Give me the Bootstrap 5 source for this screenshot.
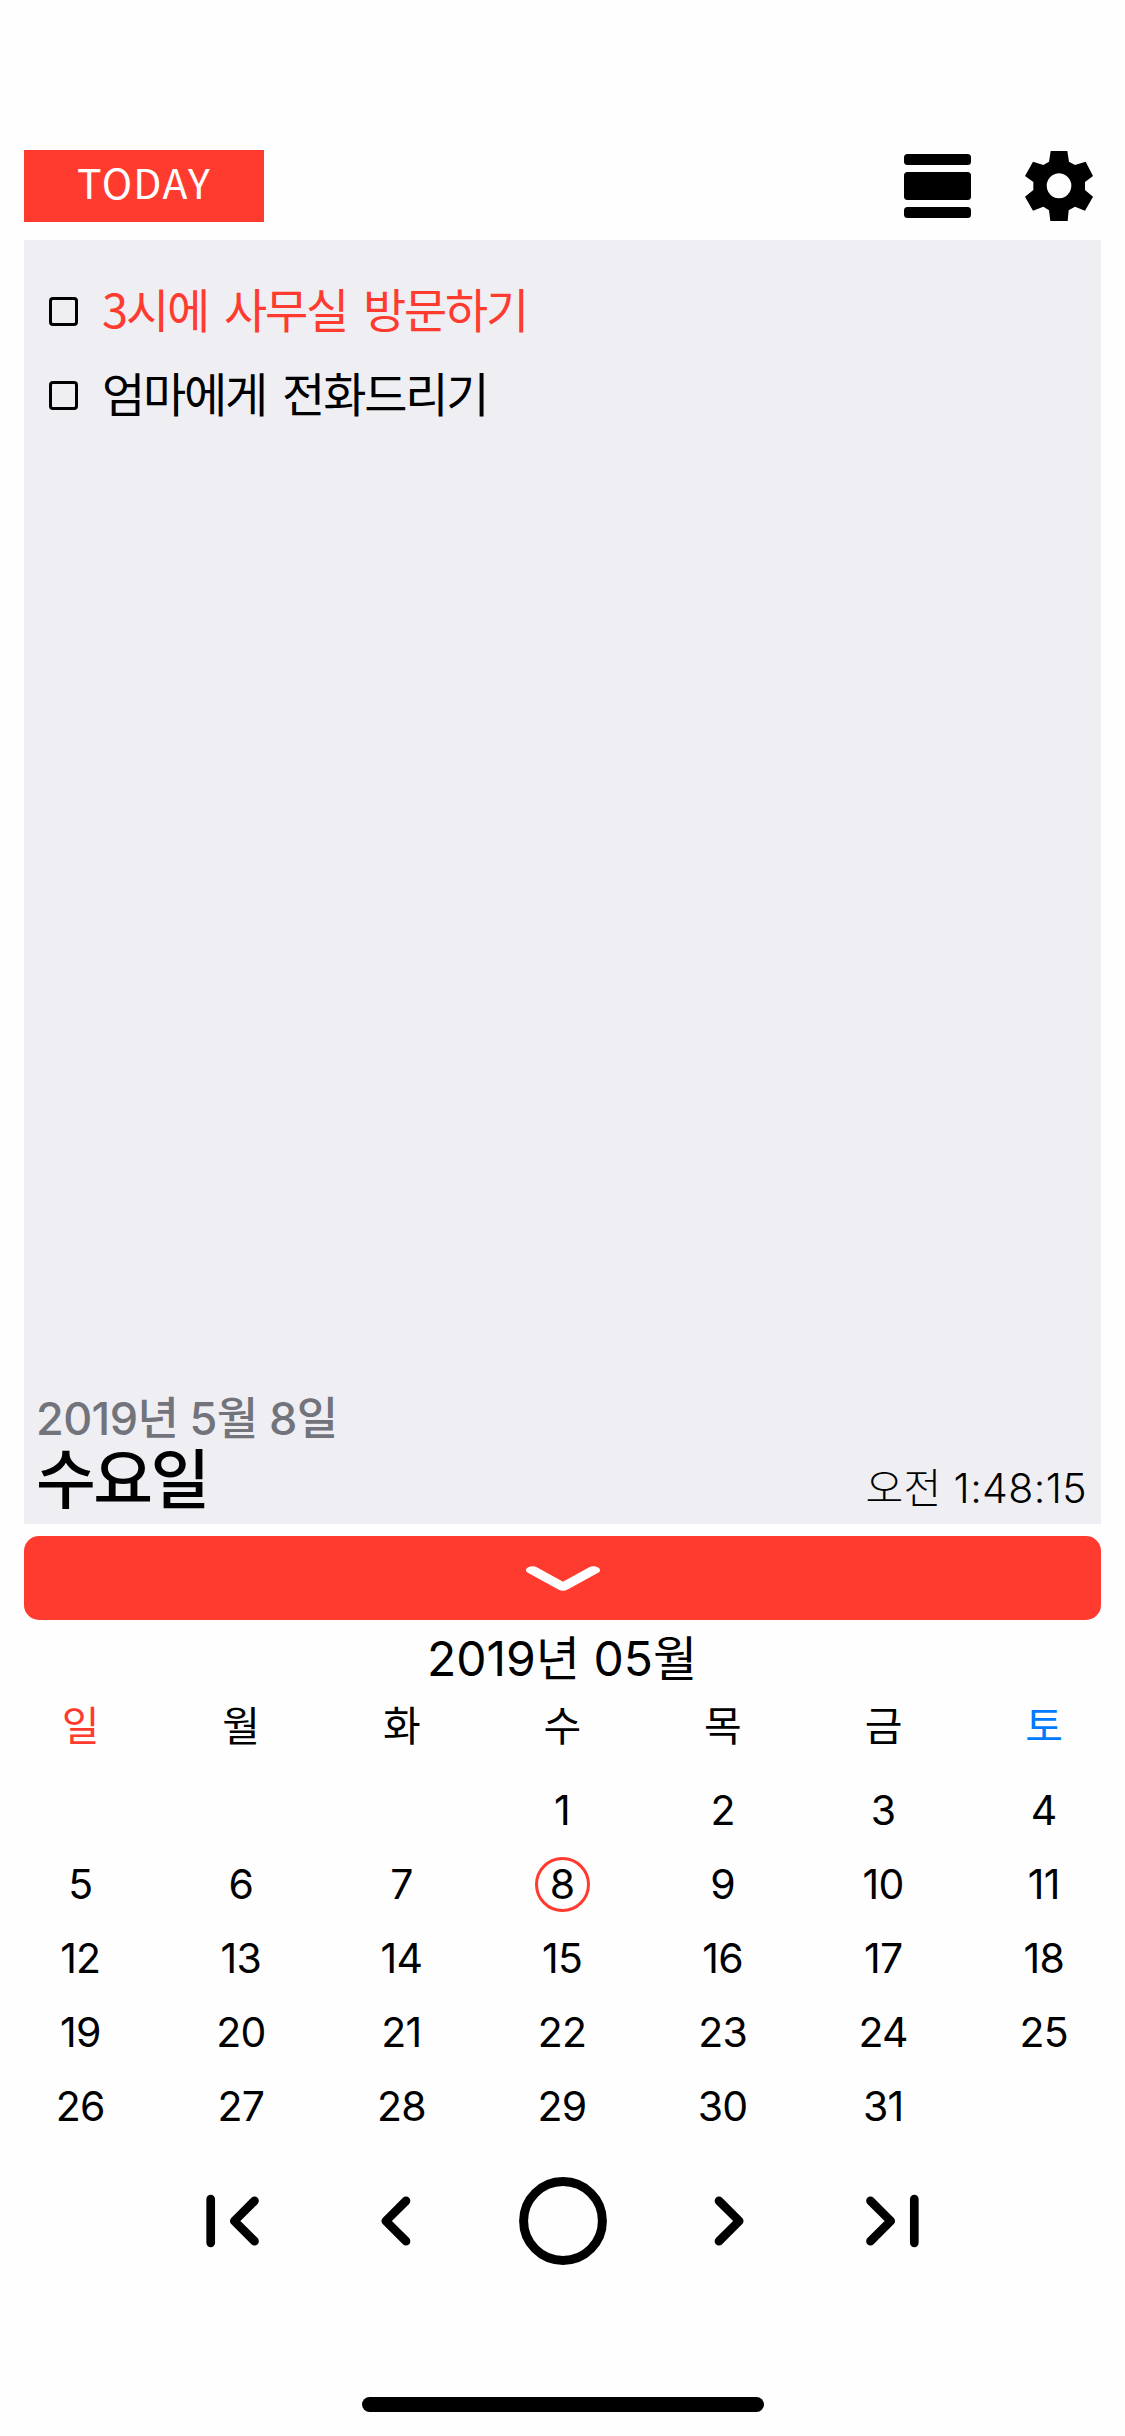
<!DOCTYPE html>
<html lang="ko">
<head>
<meta charset="utf-8">
<meta name="viewport" content="width=device-width, initial-scale=1">
<title>TODAY</title>
<link href="https://cdn.jsdelivr.net/npm/bootstrap@5.3.0/dist/css/bootstrap.min.css" rel="stylesheet">
<style>
  :root { --accent: #ff3b30; }
  body { background: #fefefe; color: #000; font-family: Inter, "Noto Sans CJK KR", sans-serif; }
  .screen { height: 2436px; padding-top: 150px; overflow: hidden; }
  .gutter { margin: 0 24px; }
  .topbar { height: 72px; }
  .today-btn { width: 240px; height: 72px; background: var(--accent); color: #fff; border: 0; font: 400 41px/60px "Noto Sans CJK KR", sans-serif; letter-spacing: 1.3px; padding: 0 0 11px; }
  .tool-icons { gap: 54px; margin-right: 8px; }
  .memo { height: 1284px; margin-top: 18px; background: #eeeef3; padding: 30px 14px 9px 12px; }
  .todo { height: 84px; padding-left: 13px; font: 400 47px/76px "Noto Sans CJK KR", sans-serif; letter-spacing: -2.2px; word-spacing: 5px; }
  .todo-text { padding-bottom: 9px; }
  .box { width: 29px; height: 29px; border: 3px solid #000; border-radius: 4px; margin: 0 24px 1px 0; }
  .accent-text { color: var(--accent); }
  .sat { color: #007aff; }
  .date-line { font-size: 45px; line-height: 50px; font-weight: 500; color: #72737b; letter-spacing: -.6px; }
  .weekday-line { font-size: 65px; line-height: 71px; font-weight: 500; letter-spacing: -2.6px; }
  .clock { font-size: 41px; line-height: 54px; font-weight: 300; letter-spacing: .4px; }
  .fold-btn { height: 84px; margin-top: 12px; background: var(--accent); border: 0; border-radius: 15px; }
  .month-title { height: 76px; line-height: 77px; font-size: 48px; letter-spacing: 0; }
  .calendar { padding-right: 1px; }
  .cal-row { height: 74px; font-size: 41px; line-height: 74px; letter-spacing: -.7px; }
  .cal-head { height: 77px; line-height: 60px; }
  .today-mark { width: 55px; height: 55px; border: 3px solid var(--accent); border-radius: 50%; }
  .pager { height: 90px; margin-top: 33px; gap: 107.5px; }
  .home-bar { width: 402px; height: 15px; border-radius: 8px; background: #000; margin: 131px auto 0; }
  .edge-first { margin-right: 14.5px; }
  .edge-last { margin-left: 14.5px; }
</style>
</head>
<body>
<div class="screen">
  <header class="gutter topbar d-flex justify-content-between align-items-center">
    <button class="today-btn">TODAY</button>
    <div class="tool-icons d-flex align-items-center">
      <svg width="67" height="64" viewBox="0 0 67 64"><rect width="67" height="11" rx="3.5"/><rect y="18" width="67" height="28" rx="3.5"/><rect y="53" width="67" height="11" rx="3.5"/></svg>
      <svg width="68" height="70" viewBox="0 0 204 210"><path fill-rule="evenodd" d="M77 0h50l5 32 18 10 32-10 22 43-24 18v24l24 20-24 42-30-12-19 11-3 32H76l-4-32-17-11-31 12L0 137l25-20V93L0 75 24 32l31 10 17-10ZM102 67a37 37.500 0 1 0 .1 0Z"/></svg>
    </div>
  </header>

  <main class="gutter memo d-flex flex-column justify-content-between">
    <div>
      <div class="todo d-flex align-items-center accent-text"><span class="box"></span><span class="todo-text">3시에 사무실 방문하기</span></div>
      <div class="todo d-flex align-items-center"><span class="box"></span><span class="todo-text">엄마에게 전화드리기</span></div>
    </div>
    <div class="d-flex justify-content-between align-items-end">
      <div>
        <div class="date-line">2019년 5월 8일</div>
        <div class="weekday-line">수요일</div>
      </div>
      <div class="clock">오전 1:48:15</div>
    </div>
  </main>

  <div class="gutter d-grid">
    <button class="fold-btn d-flex justify-content-center align-items-center" aria-label="접기">
      <svg width="76" height="26" viewBox="0 0 76 26"><g transform="translate(38 0) scale(1.8 1)"><path d="M-16.900 5.200 0 21.800 16.900 5.200" fill="none" stroke="#fff" stroke-width="7.400" stroke-linecap="round" stroke-linejoin="round"/></g></svg>
    </button>
  </div>

  <section class="calendar text-center">
    <div class="month-title">2019년 05월</div>
    <div class="cal-row cal-head row g-0"><div class="col accent-text">일</div><div class="col">월</div><div class="col">화</div><div class="col">수</div><div class="col">목</div><div class="col">금</div><div class="col sat">토</div></div>
    <div class="cal-row row g-0"><div class="col"></div><div class="col"></div><div class="col"></div><div class="col">1</div><div class="col">2</div><div class="col">3</div><div class="col">4</div></div>
    <div class="cal-row row g-0"><div class="col">5</div><div class="col">6</div><div class="col">7</div><div class="col d-flex justify-content-center align-items-center"><span class="today-mark d-flex justify-content-center align-items-center">8</span></div><div class="col">9</div><div class="col">10</div><div class="col">11</div></div>
    <div class="cal-row row g-0"><div class="col">12</div><div class="col">13</div><div class="col">14</div><div class="col">15</div><div class="col">16</div><div class="col">17</div><div class="col">18</div></div>
    <div class="cal-row row g-0"><div class="col">19</div><div class="col">20</div><div class="col">21</div><div class="col">22</div><div class="col">23</div><div class="col">24</div><div class="col">25</div></div>
    <div class="cal-row row g-0"><div class="col">26</div><div class="col">27</div><div class="col">28</div><div class="col">29</div><div class="col">30</div><div class="col">31</div><div class="col"></div></div>
  </section>

  <nav class="pager d-flex justify-content-center align-items-center">
    <svg class="edge-first" width="53" height="54" viewBox="0 0 53 54" fill="none" stroke="#000" stroke-width="8.700" stroke-linecap="round" stroke-linejoin="round"><path d="M4.700 5.200v43.600M48.500 6.800 28.300 27l20.200 20.200"/></svg>
    <svg width="30" height="54" viewBox="0 0 30 54" fill="none" stroke="#000" stroke-width="8.700" stroke-linecap="round" stroke-linejoin="round"><path d="M25 6.800 4.800 27 25 47.200"/></svg>
    <svg width="88" height="88" viewBox="0 0 88 88" fill="none" stroke="#000" stroke-width="9"><circle cx="44" cy="44" r="39.400"/></svg>
    <svg width="30" height="54" viewBox="0 0 30 54" fill="none" stroke="#000" stroke-width="8.700" stroke-linecap="round" stroke-linejoin="round"><path d="M5 6.800 25.200 27 5 47.200"/></svg>
    <svg class="edge-last" width="53" height="54" viewBox="0 0 53 54" fill="none" stroke="#000" stroke-width="8.700" stroke-linecap="round" stroke-linejoin="round"><path d="M48.300 5.200v43.600M4.500 6.800 24.700 27 4.500 47.200"/></svg>
  </nav>
  <div class="home-bar"></div>
</div>
<script src="https://cdn.jsdelivr.net/npm/bootstrap@5.3.0/dist/js/bootstrap.bundle.min.js"></script>
</body>
</html>
